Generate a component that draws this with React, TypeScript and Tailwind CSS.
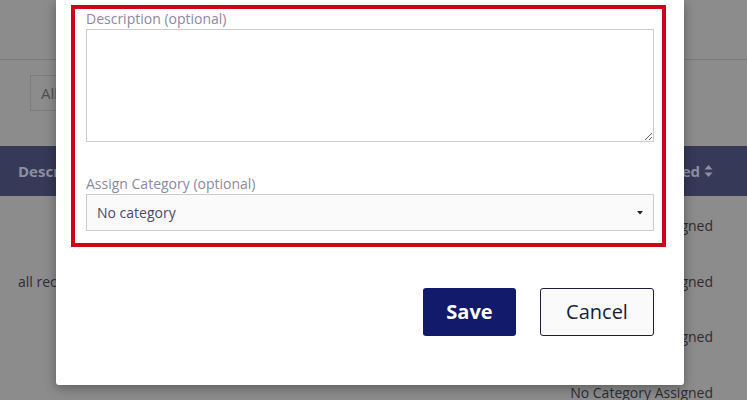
import React from 'react';

const rows = [
  { desc: '', cat: 'No Category Assigned' },
  { desc: 'all records', cat: 'No Category Assigned' },
  { desc: '', cat: 'No Category Assigned' },
  { desc: '', cat: 'No Category Assigned' },
];

const SortIcon = () => (
  <svg width="9" height="14" viewBox="0 0 9 14" className="ml-[4px] inline-block">
    <path d="M4.5 1 L8.5 5.5 H0.5 Z" fill="#8d8fa3" />
    <path d="M4.5 13 L8.5 8.5 H0.5 Z" fill="#8d8fa3" />
  </svg>
);

const BackgroundPage = () => (
  <div className="w-[747px]">
    <div className="h-[60px] border-b border-[#7a7a7a]" />
    <div className="h-[86px] pl-[30px] pt-[15px]">
      <div className="flex h-[36px] w-[140px] items-center border border-[#7c7c7c] pl-[10px] text-[15px] text-[#4f4f4f]">
        All
      </div>
    </div>
    <div className="flex h-[50px] items-center justify-between bg-[#363957] pl-[18px] pr-[34px] text-[15px] font-bold text-[#8d8fa3]">
      <span>Description</span>
      <span className="flex items-center">
        Category Assigned
        <SortIcon />
      </span>
    </div>
    {rows.map((r, i) => (
      <div
        key={i}
        className="flex h-[55.5px] items-center justify-between pl-[18px] pr-[34px] pt-[4px] text-[14px] text-[#2c2c33]"
      >
        <span>{r.desc}</span>
        <span>{r.cat}</span>
      </div>
    ))}
  </div>
);

const App: React.FC = () => {
  return (
    <div
      className="relative h-[400px] w-[747px] overflow-hidden bg-[#8c8c8c]"
      style={{ fontFamily: '"Open Sans", "Noto Sans", sans-serif' }}
    >
      <BackgroundPage />

      <div className="absolute left-[56px] top-0 flex h-[385px] w-[628px] flex-col rounded-b-[3px] bg-white shadow-[0_3px_12px_rgba(0,0,0,0.35)]">
        <div className="ml-[15px] mt-[5px] w-[595px] border-[4px] border-[#d0021b] pb-[12px] pl-[11px] pr-[8px]">
          <label className="block text-[14px] leading-[20px] text-[#8a8aa1]">
            Description (optional)
          </label>
          <textarea className="block h-[113px] w-full resize-y border border-[#cccccc] bg-white p-[8px] text-[14px] outline-none" />

          <label className="mt-[32px] block text-[14px] leading-[20px] text-[#8a8aa1]">
            Assign Category (optional)
          </label>
          <div className="flex h-[37px] w-full items-center justify-between border border-[#cccccc] bg-[#fafafa] pl-[10px] pr-[10px] text-[14px] text-[#4b4b66]">
            <span>No category</span>
            <svg width="6" height="4" viewBox="0 0 6 4">
              <path d="M0 0 H6 L3 3.5 Z" fill="#222222" />
            </svg>
          </div>
        </div>

        <div className="mt-[41px] flex justify-end gap-[24px] pr-[30px]">
          <button className="h-[48px] w-[93px] rounded-[3px] bg-[#111a6b] text-[20px] font-bold text-white">
            Save
          </button>
          <button className="h-[48px] w-[114px] rounded-[3px] border border-[#1c1c3c] bg-[#fafafa] text-[20px] font-medium text-[#1a1f36]">
            Cancel
          </button>
        </div>
      </div>
    </div>
  );
};

export default App;
